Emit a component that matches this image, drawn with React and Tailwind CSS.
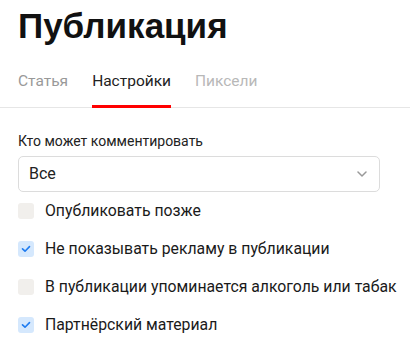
import React from "react";

function Check({ checked, label }) {
  return (
    <div className="flex items-center h-[38px]">
      <div
        className={
          "w-4 h-4 shrink-0 rounded-[3px] flex items-center justify-center " +
          (checked ? "bg-[#d5e8fd]" : "bg-[#f1efec]")
        }
      >
        {checked && (
          <svg width="10" height="8" viewBox="0 0 10 8" fill="none">
            <path d="M1.5 3.8 L4 6.2 L8.5 1.6" stroke="#1f7cf0" strokeWidth="1.6" strokeLinecap="round" strokeLinejoin="round" />
          </svg>
        )}
      </div>
      <span className="ml-[11px] text-[15.8px] text-[#1a1a1a] whitespace-nowrap">{label}</span>
    </div>
  );
}

export default function App() {
  return (
    <div className="w-[410px] h-[361px] bg-white overflow-hidden" style={{ fontFamily: "Roboto, 'Liberation Sans', sans-serif" }}>
      <div className="px-[18px] pt-[4px]">
        <h1 className="text-[35px] font-bold leading-[44px] text-[#111]" style={{ fontFamily: "'Liberation Sans', Arial, sans-serif" }}>
          Публикация
        </h1>
      </div>
      <div className="mt-[22px] border-b border-[#e6e6e6] px-[18px] flex gap-[24px] text-[15.5px]">
        <div className="pb-[14px] text-[#999]">Статья</div>
        <div className="pb-[12px] text-[#222] border-b-[3px] border-[#f00] -mb-px">Настройки</div>
        <div className="pb-[14px] text-[#b8b8b8]">Пиксели</div>
      </div>
      <div className="px-[18px] pt-[24px]">
        <div className="text-[14px] text-[#222] leading-[18px]">Кто может комментировать</div>
        <div className="mt-[6px] w-[362px] h-[36px] border border-[#dcdcdc] rounded-[5px] flex items-center justify-between pl-[10px] pr-[12px]">
          <span className="text-[16px] text-[#222]">Все</span>
          <svg width="10" height="6" viewBox="0 0 10 6" fill="none">
            <path d="M1 1 L5 5 L9 1" stroke="#999" strokeWidth="1.5" strokeLinecap="round" strokeLinejoin="round" />
          </svg>
        </div>
        <div>
          <Check checked={false} label="Опубликовать позже" />
          <Check checked={true} label="Не показывать рекламу в публикации" />
          <Check checked={false} label="В публикации упоминается алкоголь или табак" />
          <Check checked={true} label="Партнёрский материал" />
        </div>
      </div>
    </div>
  );
}
